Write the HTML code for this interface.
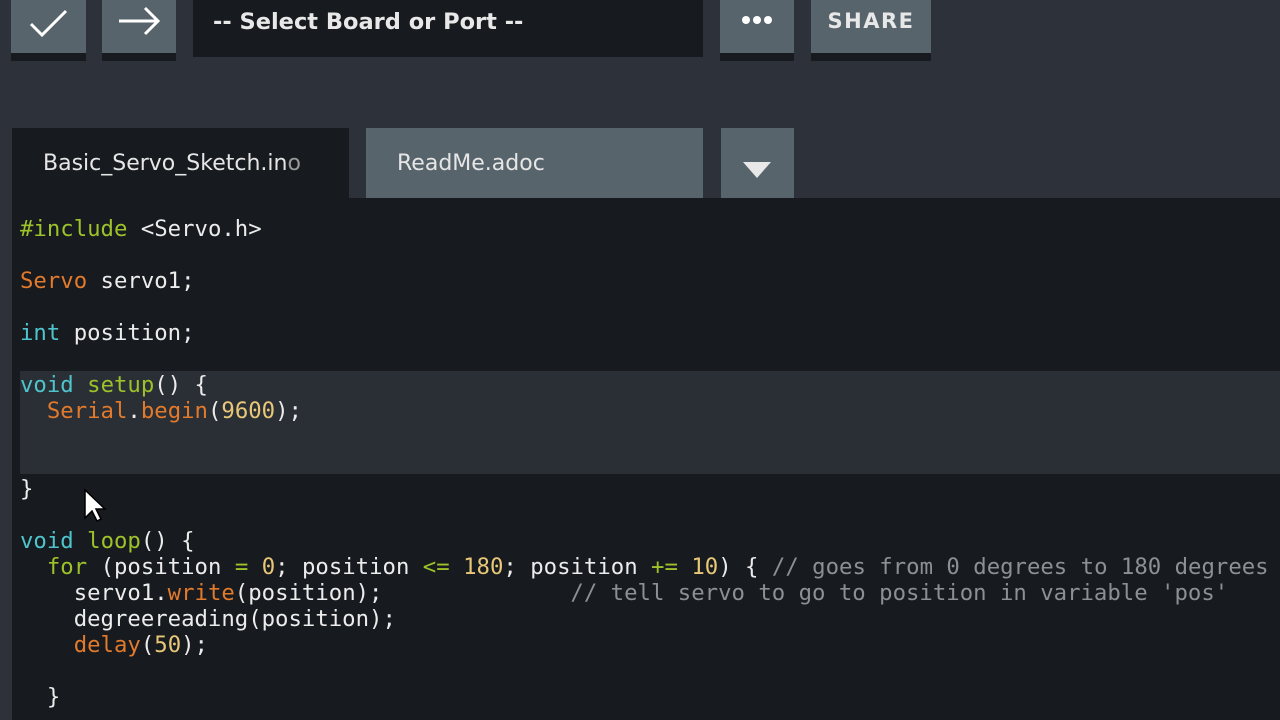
<!DOCTYPE html>
<html><head><meta charset="utf-8"><style>
*{margin:0;padding:0;box-sizing:border-box}
body{width:1280px;height:720px;overflow:hidden;background:#2d313a;position:relative;font-family:"DejaVu Sans","Liberation Sans",sans-serif}
.b{position:absolute;background:#57646c;box-shadow:0 8px 0 #171a1e}
.sel{position:absolute;left:193px;top:0;width:510px;height:57px;background:#171a1e;color:#e8e8e8;font-weight:bold;font-size:22.5px;padding:9px 0 0 20px}
.tab{position:absolute;top:128px;height:70px;font-size:22px;color:#e6e6e6;padding-top:23px}
.ed{position:absolute;left:12px;top:198px;width:1268px;height:522px;background:#171a1e}
.hl{position:absolute;left:20px;top:371px;width:1260px;height:103px;background:#2a2e35}
pre{position:absolute;left:20px;top:216px;font-family:"DejaVu Sans Mono","Liberation Mono",monospace;font-size:22.3px;line-height:26px;color:#ececec;letter-spacing:0}
.k{color:#4ec5cc}.f{color:#9dc22a}.o{color:#e27a2c}.n{color:#e8c878}.c{color:#8b9095}
</style></head><body>
<div class="b" style="left:11px;top:0;width:75px;height:53px"><svg width="75" height="53"><path d="M20 24 L31 35 L55 11" stroke="#fff" stroke-width="3" fill="none"/></svg></div>
<div class="b" style="left:102px;top:0;width:74px;height:53px"><svg width="74" height="53"><path d="M17 21 H56 M43 8 L56 21 L43 34" stroke="#fff" stroke-width="3" fill="none"/></svg></div>
<div class="sel">-- Select Board or Port --</div>
<div class="b" style="left:720px;top:0;width:74px;height:53px"><svg width="74" height="53"><circle cx="26" cy="20" r="4" fill="#fff"/><circle cx="37" cy="20" r="4" fill="#fff"/><circle cx="48" cy="20" r="4" fill="#fff"/></svg></div>
<div class="b" style="left:811px;top:0;width:120px;height:53px;color:#e8e8e8;font-size:21px;font-weight:bold;letter-spacing:1.5px;text-align:center;padding-top:9px">SHARE</div>
<div class="tab" style="left:12px;width:337px;background:#171a1e;padding-left:31px">Basic_Servo_Sketch.in<span style="color:#999">o</span></div>
<div class="tab" style="left:366px;width:337px;background:#57646c;padding-left:31px">ReadMe.adoc</div>
<div class="tab" style="left:721px;width:73px;background:#57646c;padding-top:20px"><svg width="73" height="40"><path d="M22 28 L50 28 L36 44Z" fill="#e8e8e8" transform="translate(0,-14)"/></svg></div>
<div class="ed"></div>
<div class="hl"></div>
<pre><span class="f">#include</span> &lt;Servo.h&gt;

<span class="o">Servo</span> servo1;

<span class="k">int</span> position;

<span class="k">void</span> <span class="f">setup</span>() {
  <span class="o">Serial</span>.<span class="o">begin</span>(<span class="n">9600</span>);


}

<span class="k">void</span> <span class="f">loop</span>() {
  <span class="f">for</span> (position <span class="f">=</span> <span class="n">0</span>; position <span class="f">&lt;=</span> <span class="n">180</span>; position <span class="f">+=</span> <span class="n">10</span>) { <span class="c">// goes from 0 degrees to 180 degrees</span>
    servo1.<span class="o">write</span>(position);              <span class="c">// tell servo to go to position in variable 'pos'</span>
    degreereading(position);
    <span class="o">delay</span>(<span class="n">50</span>);

  }</pre>
<svg style="position:absolute;left:83px;top:488px" width="24" height="36"><path d="M2 2 L2 30 L9 23 L14 33 L18 31 L13 21 L22 21Z" fill="#fff" stroke="#000" stroke-width="1.5"/></svg>
</body></html>
